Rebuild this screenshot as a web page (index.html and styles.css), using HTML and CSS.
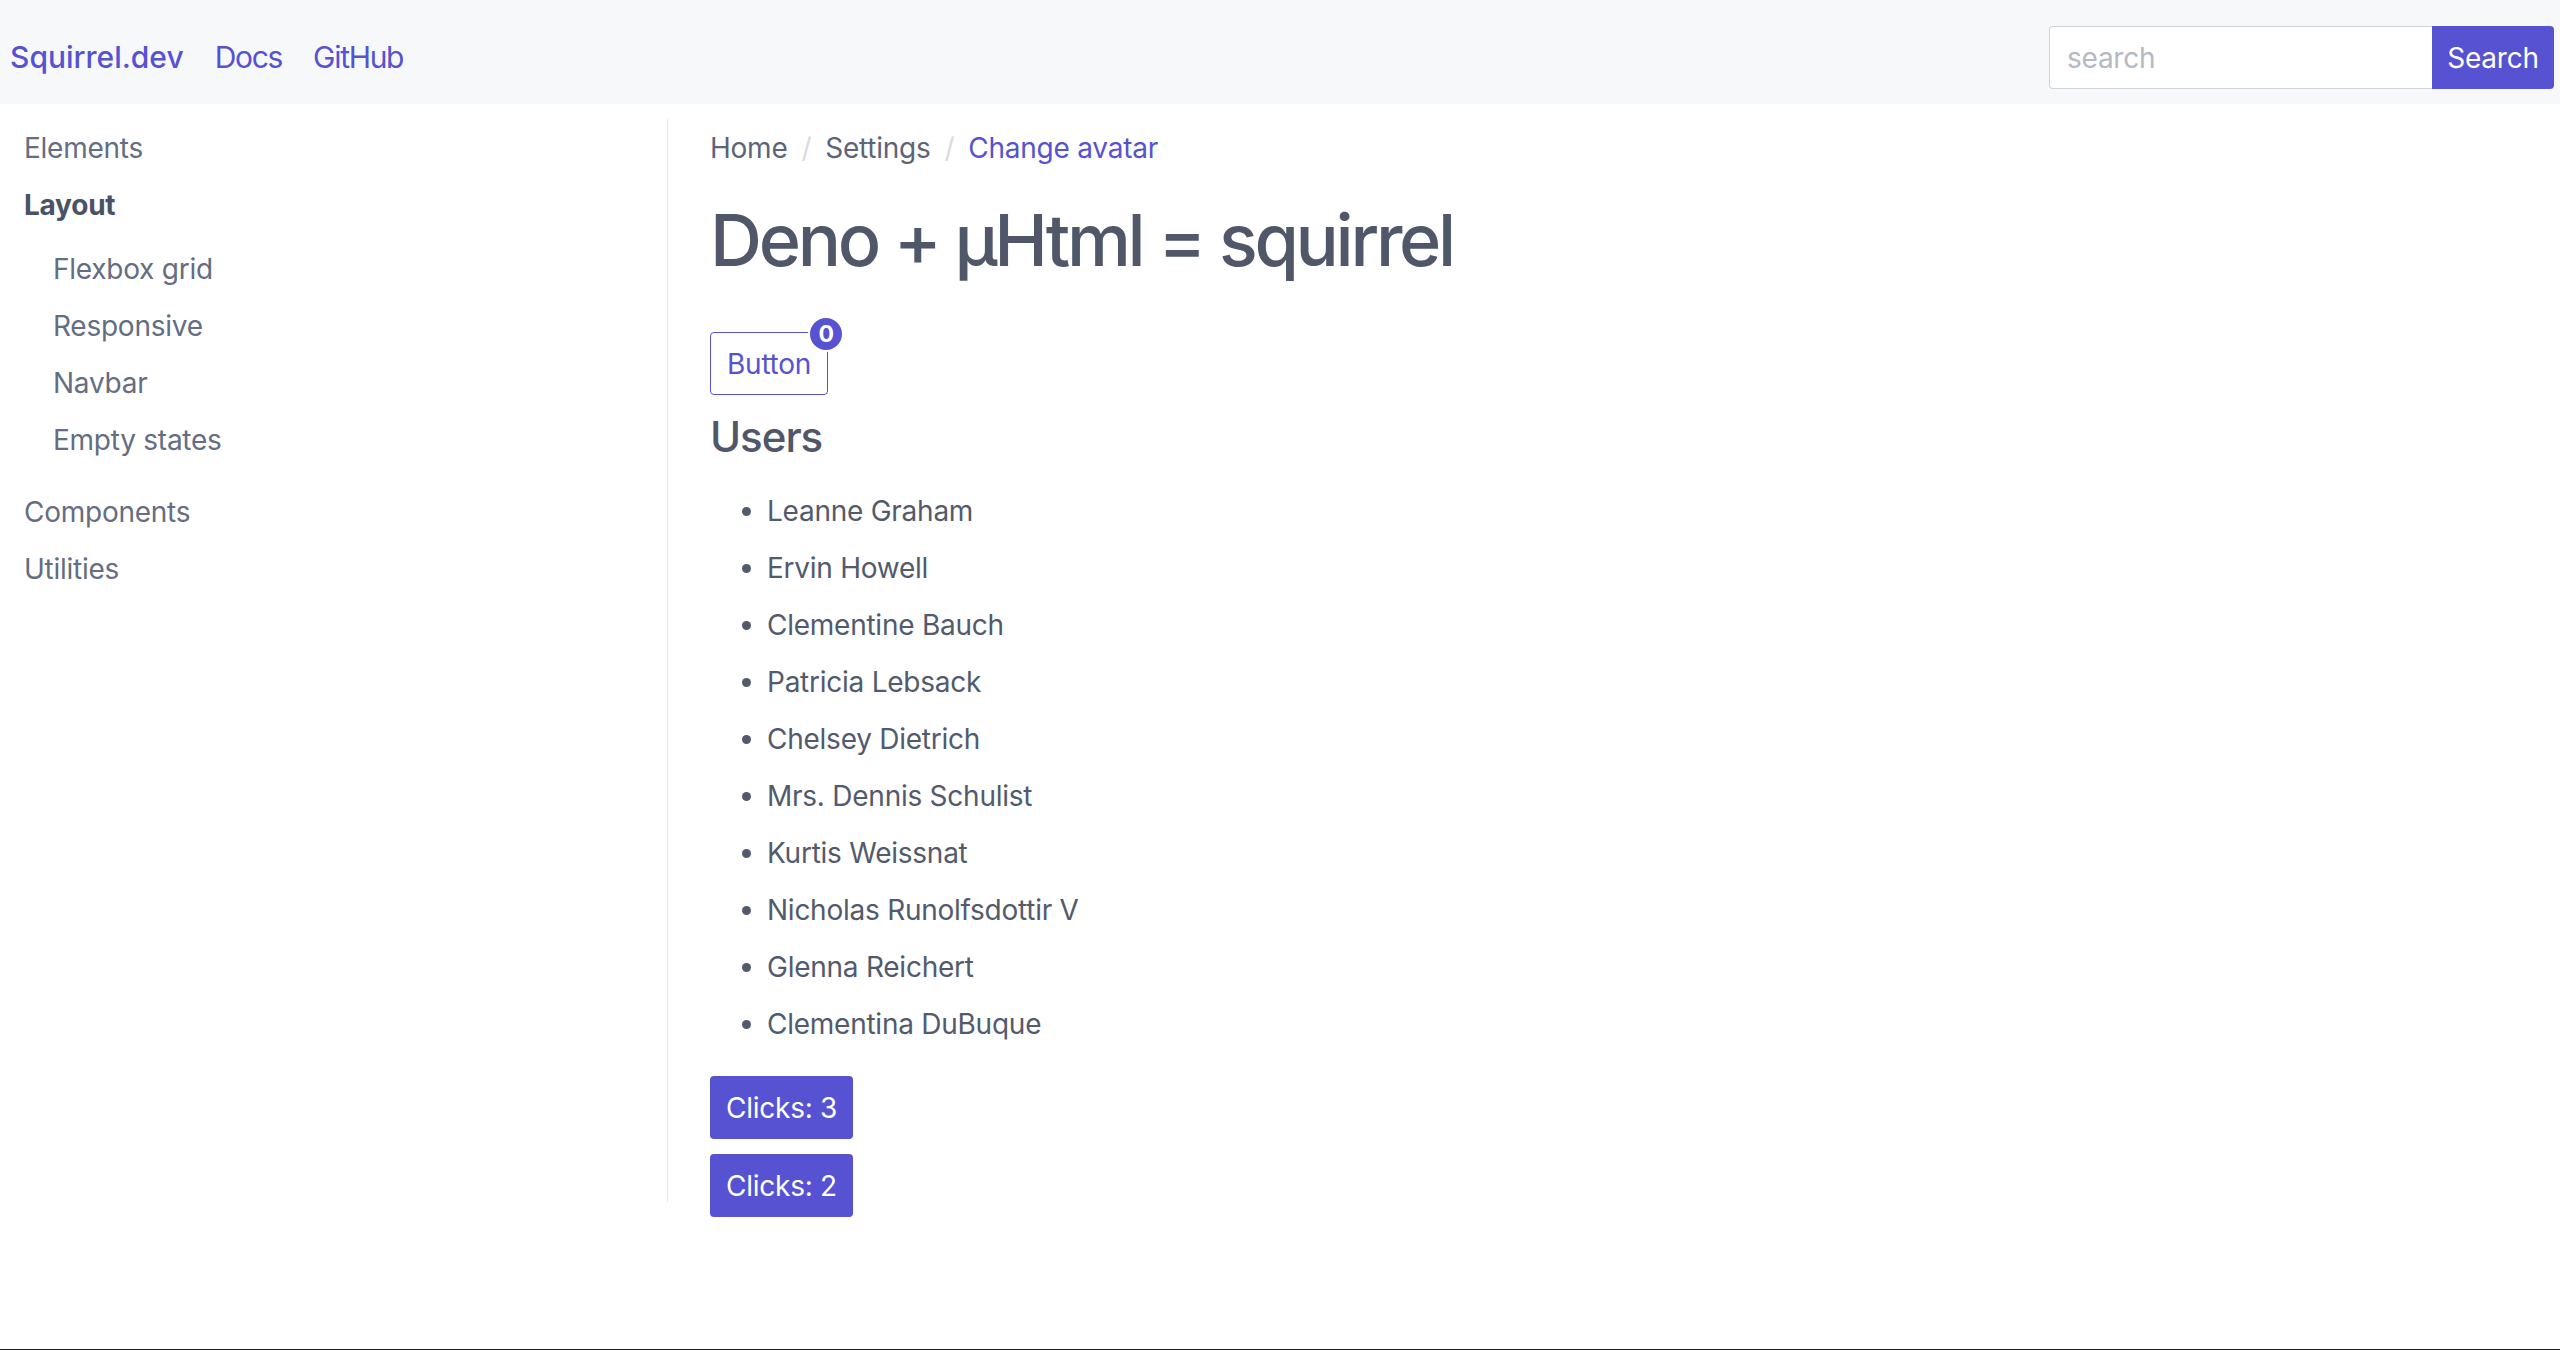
FILE: index.html
```html
<!DOCTYPE html>
<html lang="en">
<head>
<meta charset="utf-8">
<title>Squirrel.dev</title>
<link rel="stylesheet" href="styles.css">
</head>
<body>
<div class="page">
  <header class="navbar">
    <nav class="nav-links">
      <a class="brand" href="#">Squirrel.dev</a>
      <a class="nav-link" href="#">Docs</a>
      <a class="nav-link" href="#">GitHub</a>
    </nav>
    <form class="search">
      <input class="search-input" type="text" placeholder="search">
      <button class="search-btn" type="button">Search</button>
    </form>
  </header>
  <div class="layout">
    <aside class="sidebar">
      <ul class="menu">
        <li class="menu-item">Elements</li>
        <li class="menu-item active">Layout</li>
        <li>
          <ul class="submenu">
            <li class="menu-item">Flexbox grid</li>
            <li class="menu-item">Responsive</li>
            <li class="menu-item">Navbar</li>
            <li class="menu-item">Empty states</li>
          </ul>
        </li>
        <li class="menu-item">Components</li>
        <li class="menu-item">Utilities</li>
      </ul>
    </aside>
    <main class="content">
      <ol class="breadcrumb">
        <li class="crumb">Home</li>
        <li class="sep">/</li>
        <li class="crumb">Settings</li>
        <li class="sep">/</li>
        <li class="crumb current">Change avatar</li>
      </ol>
      <h1 class="title">Deno + µHtml = squirrel</h1>
      <div class="badge-wrap">
        <button class="btn-outline" type="button">Button</button>
        <span class="badge">0</span>
      </div>
      <h2 class="subtitle">Users</h2>
      <ul class="users">
        <li>Leanne Graham</li>
        <li>Ervin Howell</li>
        <li>Clementine Bauch</li>
        <li>Patricia Lebsack</li>
        <li>Chelsey Dietrich</li>
        <li>Mrs. Dennis Schulist</li>
        <li>Kurtis Weissnat</li>
        <li>Nicholas Runolfsdottir V</li>
        <li>Glenna Reichert</li>
        <li>Clementina DuBuque</li>
      </ul>
      <div class="actions">
        <button class="btn-primary" type="button">Clicks: 3</button>
        <button class="btn-primary" type="button">Clicks: 2</button>
      </div>
    </main>
  </div>
</div>
</body>
</html>
```
FILE: styles.css
```css
* { box-sizing: border-box; }

html, body {
  margin: 0;
  padding: 0;
}

body {
  font-family: Inter, "Noto Sans", "Liberation Sans", sans-serif;
  font-size: 28px;
  letter-spacing: -0.25px;
  color: #525a6d;
  background: #ffffff;
}

.page {
  min-height: 1350px;
  border-bottom: 1px solid #1c1c1c;
}

/* Navbar */
.navbar {
  height: 104px;
  background: #f7f8fa;
  display: flex;
  align-items: center;
  justify-content: space-between;
  padding: 26px 6px 15px 10px;
}

.nav-links {
  display: flex;
  align-items: center;
  gap: 31px;
}

.nav-links a {
  text-decoration: none;
  color: #5652d2;
  font-size: 30px;
  line-height: 45px;
}

.brand {
  font-weight: 500;
  letter-spacing: 0;
}

.nav-link {
  letter-spacing: -1.3px;
}

.search {
  display: flex;
  margin: 0;
}

.search-input {
  width: 383px;
  height: 63px;
  border: 1.5px solid #d0d4db;
  border-right: 0;
  border-radius: 4px 0 0 4px;
  background: #fff;
  font-family: inherit;
  font-size: 28px;
  letter-spacing: -0.25px;
  padding: 0 17px;
  color: #525a6d;
  outline: none;
}

.search-input::placeholder {
  color: #b3b9c5;
}

.search-btn {
  width: 122px;
  height: 63px;
  border: 0;
  border-radius: 0 4px 4px 0;
  background: #5652d2;
  color: #fff;
  font-family: inherit;
  font-size: 28px;
  letter-spacing: -0.25px;
  padding: 0;
}

/* Layout */
.layout {
  display: flex;
  margin-top: 15px;
}

.sidebar {
  width: 668px;
  flex: none;
  border-right: 1.5px solid #e8e9ed;
}

.menu, .submenu {
  list-style: none;
  margin: 0;
  padding: 0;
}

.menu {
  padding-left: 24px;
  padding-top: 1px;
}

.menu-item {
  line-height: 57px;
  color: #646d82;
}

.menu-item.active {
  font-weight: 700;
  color: #4a5265;
}

.submenu {
  padding-left: 29px;
  margin: 7px 0 15px;
}

/* Content */
.content {
  flex: 1;
  padding-left: 42px;
  margin-bottom: -15px;
}

.breadcrumb {
  list-style: none;
  margin: 0;
  padding: 1px 0 0;
  display: flex;
  line-height: 57px;
}

.crumb {
  color: #5c6477;
}

.crumb.current {
  color: #5652d2;
}

.sep {
  color: #d8dbe1;
  margin: 0 14px;
}

.title {
  margin: 20px 0 0;
  font-size: 72px;
  line-height: 86px;
  font-weight: 500;
  color: #4f5769;
  letter-spacing: -3.3px;
}

.badge-wrap {
  display: inline-flex;
  position: relative;
  margin-top: 49px;
}

.btn-outline {
  height: 63px;
  padding: 0 16px;
  border: 1.5px solid #5652d2;
  border-radius: 4px;
  background: #fff;
  color: #5652d2;
  font-family: inherit;
  font-size: 28px;
  letter-spacing: -0.25px;
  line-height: 42px;
}

.badge {
  position: absolute;
  top: -16px;
  right: -16px;
  width: 36px;
  height: 36px;
  border-radius: 50%;
  border: 2px solid #fff;
  background: #5652d2;
  color: #fff;
  font-size: 23px;
  font-weight: 700;
  line-height: 1;
  display: flex;
  align-items: center;
  justify-content: center;
}

.subtitle {
  margin: 16px 0 0;
  font-size: 42px;
  line-height: 51px;
  font-weight: 500;
  letter-spacing: -1px;
  color: #4f5769;
}

.users {
  margin: 21px 0 0;
  padding-left: 57px;
  line-height: 57px;
  color: #525a6d;
}

.actions {
  display: flex;
  flex-direction: column;
  align-items: flex-start;
  gap: 15px;
  margin-top: 23px;
}

.btn-primary {
  height: 63px;
  padding: 0 16px;
  border: 0;
  border-radius: 4px;
  background: #5652d2;
  color: #fff;
  font-family: inherit;
  font-size: 28px;
  letter-spacing: -0.25px;
  line-height: 42px;
}
```
